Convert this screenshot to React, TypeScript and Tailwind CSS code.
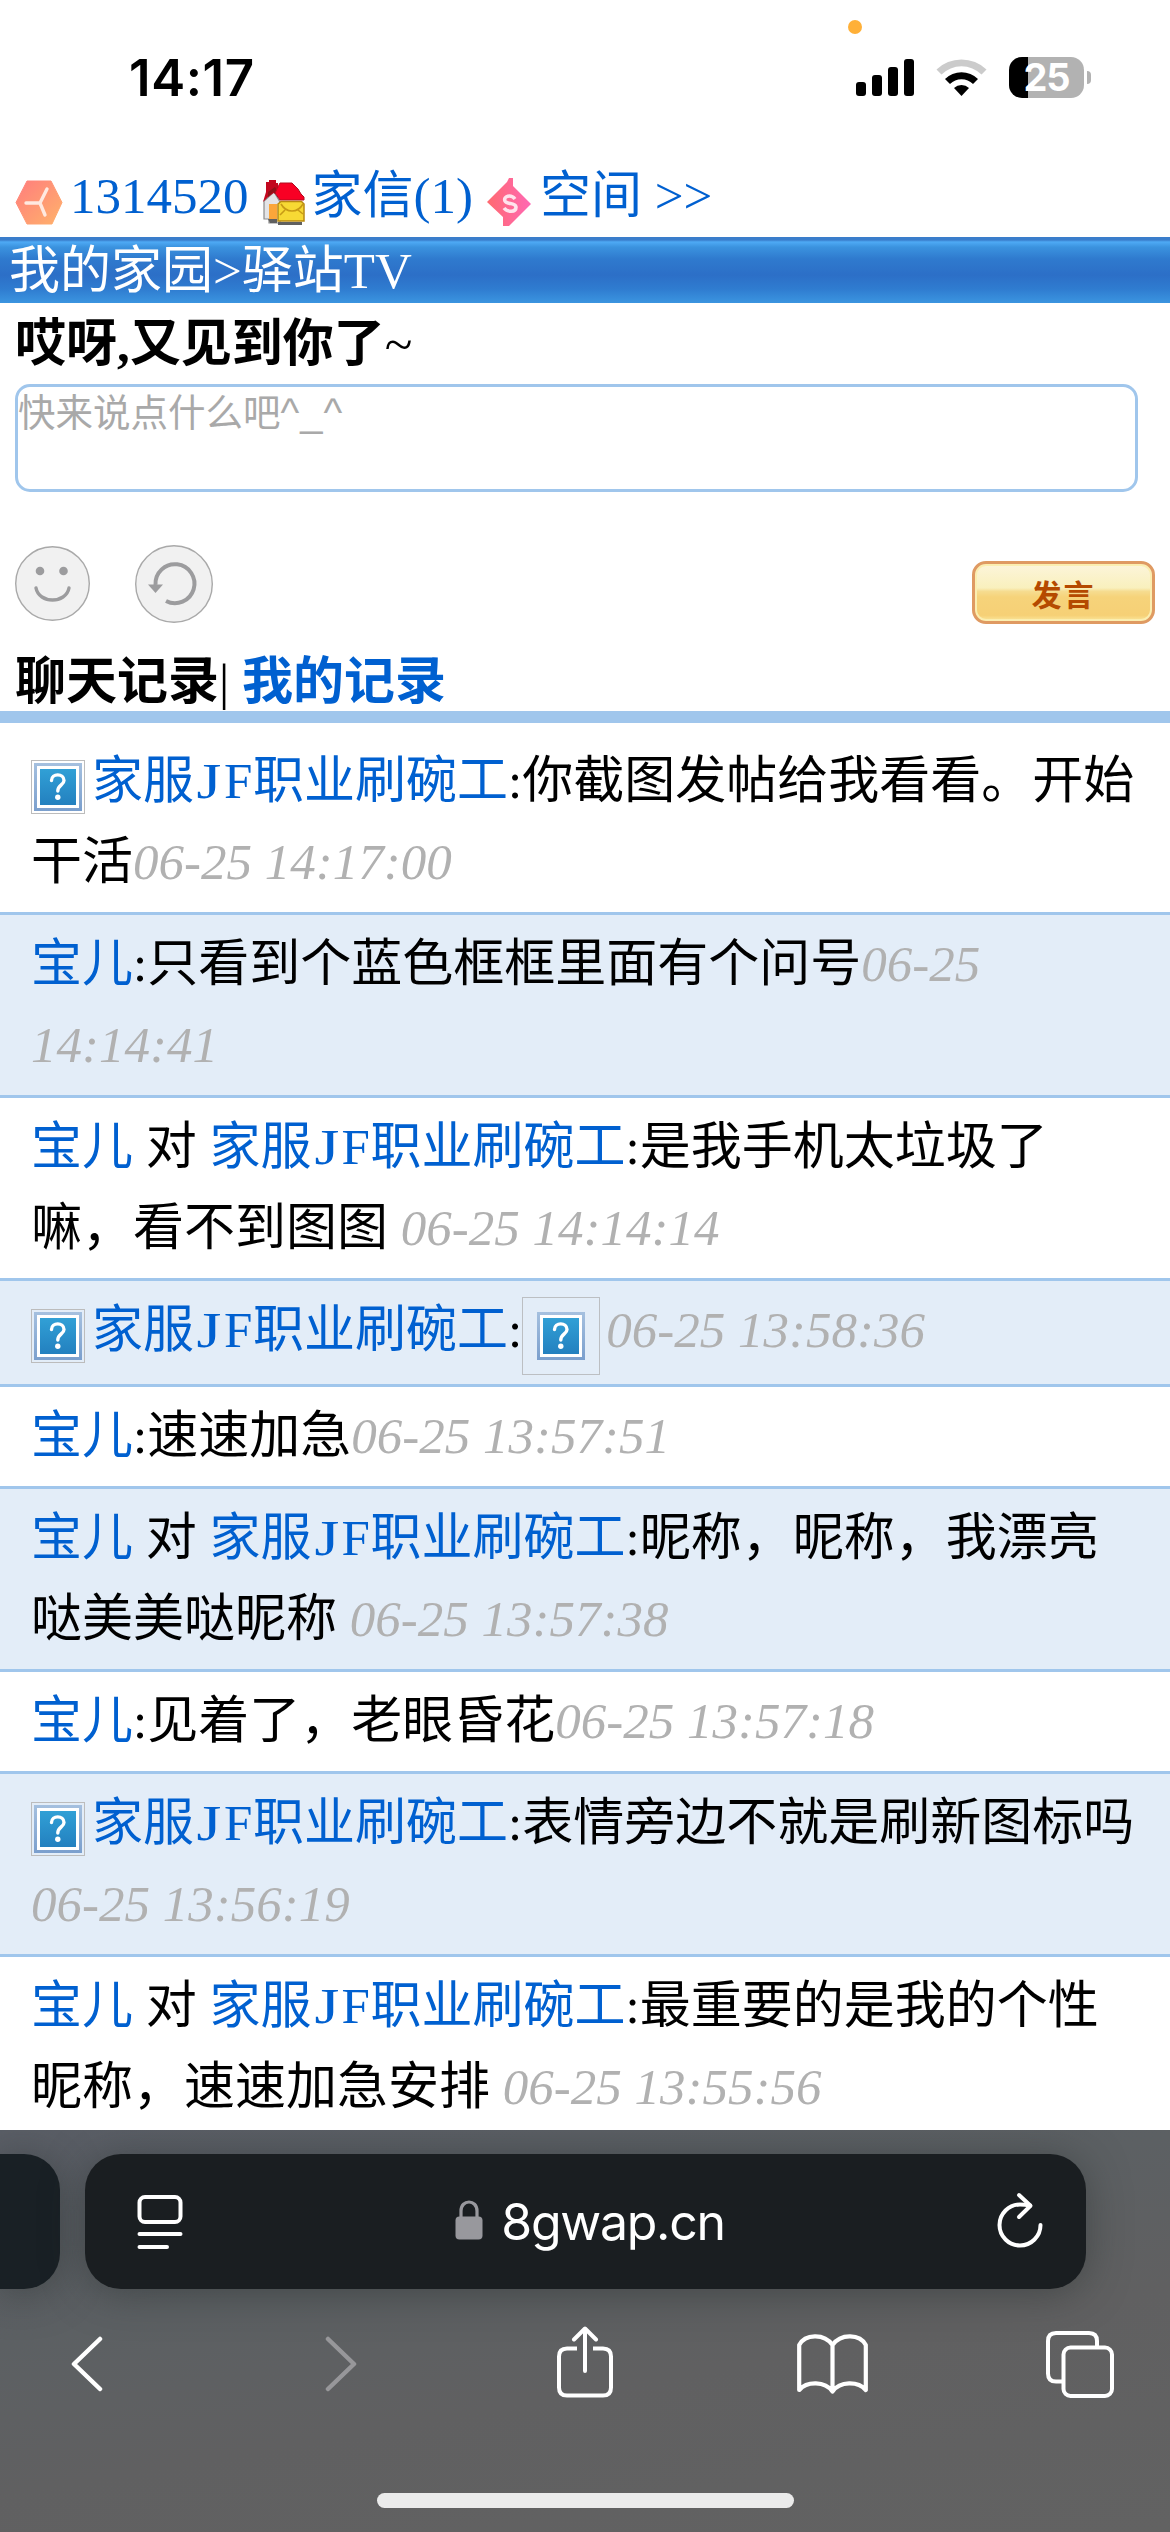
import React from 'react';

interface Message {
    height: string;
    icon?: boolean;
    from: string;
    to?: string;
    lines: string[];
    picture?: boolean;
    // the date either follows the text, wraps in the middle or takes its own line
    time: string[];
}

const JF = '家服JF职业刷碗工';

const messages: Message[] = [
    { height: 'h-[183px]', icon: true, from: JF, lines: ['你截图发帖给我看看。开始', '干活'], time: ['06-25 14:17:00'] },
    { height: 'h-[183px]', from: '宝儿', lines: ['只看到个蓝色框框里面有个问号'], time: ['06-25', '14:14:41'] },
    { height: 'h-[183px]', from: '宝儿', to: JF, lines: ['是我手机太垃圾了', '嘛，看不到图图 '], time: ['06-25 14:14:14'] },
    { height: 'h-[106px]', icon: true, from: JF, lines: [''], picture: true, time: ['06-25 13:58:36'] },
    { height: 'h-[102px]', from: '宝儿', lines: ['速速加急'], time: ['06-25 13:57:51'] },
    { height: 'h-[183px]', from: '宝儿', to: JF, lines: ['昵称，昵称，我漂亮', '哒美美哒昵称 '], time: ['06-25 13:57:38'] },
    { height: 'h-[102px]', from: '宝儿', lines: ['见着了，老眼昏花'], time: ['06-25 13:57:18'] },
    { height: 'h-[183px]', icon: true, from: JF, lines: ['表情旁边不就是刷新图标吗', ''], time: ['06-25 13:56:19'] },
    { height: 'h-[183px]', from: '宝儿', to: JF, lines: ['最重要的是我的个性', '昵称，速速加急安排 '], time: ['06-25 13:55:56'] },
];

const StatusBar: React.FC = () => (
    <div className="relative h-[156px] flex items-start justify-between pl-[129px] pr-[79px] pt-[57px] font-['Inter',sans-serif]">
        <div className="absolute left-[848px] top-5 w-3.5 h-3.5 rounded-full bg-[#ffb038]" />
        <div className="text-[51px] leading-[42px] font-semibold text-black tracking-[0.6px]">14:17</div>
        <div className="flex items-start">
            <svg className="mt-0.5" width="58" height="37" viewBox="0 0 58 37">
                <rect x="0" y="23" width="10" height="14" rx="3" />
                <rect x="16" y="16" width="10" height="21" rx="3" />
                <rect x="32" y="8" width="10" height="29" rx="3" />
                <rect x="48" y="0" width="10" height="37" rx="3" />
            </svg>
            <svg className="ml-[22px] mt-0.5" width="51" height="37" viewBox="0 0 51 37">
                <path d="M0.5 10.5 A36 36 0 0 1 50.5 10.5 L45.5 15.5 A28.5 28.5 0 0 0 5.5 15.5 Z" fill="#cbcbcb" />
                <path d="M9 20 A23.5 23.5 0 0 1 42 20 L37 25 A16.5 16.5 0 0 0 14 25 Z" />
                <path d="M18 29 A11 11 0 0 1 33 29 L25.5 37 Z" />
            </svg>
            <div className="ml-[22px] w-[75px] h-[41px] rounded-[13px] bg-[linear-gradient(90deg,#000_19px,#b2b2b2_19px)] text-white text-[38px] leading-[41px] font-bold text-center tracking-[-1px]">
                25
            </div>
            <div className="ml-[3px] mt-[14px] w-1 h-[13px] rounded-r-full bg-[#b2b2b2]" />
        </div>
    </div>
);

const HexIcon: React.FC = () => (
    <svg className="w-12 h-[45px]" viewBox="0 0 48 45">
        <defs>
            <linearGradient id="hex" x1="0" y1="0" x2="1" y2="1">
                <stop offset="0" stopColor="#ff7d7d" />
                <stop offset="1" stopColor="#ffb26b" />
            </linearGradient>
        </defs>
        <path d="M12 1 H36 L47 22.5 L37 44 H12 L1 22.5 Z" fill="url(#hex)" stroke="url(#hex)" strokeWidth="1" strokeLinejoin="round" />
        <path d="M25 23 H11 M25 23 L32 9 M25 23 L30 35" stroke="#ffe9e0" strokeWidth="3.4" strokeLinecap="round" fill="none" />
    </svg>
);

const HouseIcon: React.FC = () => (
    <svg className="w-[42px] h-[45px]" viewBox="0 0 42 45">
        <path d="M1 21 L11 12 L17 22 V43 H6 V39 H1 Z" fill="#e4e4e6" stroke="#8b8b8b" strokeWidth="1.2" />
        <path d="M6 24 H14 V40 H6 Z" fill="#fba63a" />
        <path d="M15 42 H39 V45 H15 Z M5 39 H14 V43 H7 Z" fill="#606060" />
        <path d="M3 2 H6 V0 H13 V3 H15 V8 L12 12 L5 17 L0 22 L3 12 Z" fill="#c2081f" />
        <path d="M5 12 L12 7 L15 12 L12 14 L10 12 L5 17 Z" fill="#8d1218" />
        <path d="M17 3 H29 L35 9 L38 14 L41 17 V20 H17 L12 13 Z" fill="#f80024" stroke="#b10c1e" />
        <path d="M18 21.5 H38.500 L41 24 V41 H15 V24 Z" fill="#f7d934" stroke="#b98a12" strokeWidth="1.5" />
        <path d="M18 24 Q22 31 29 31 Q36 31 40 24 M22 30 L17 35 M35 30 L40 34" stroke="#c79a16" strokeWidth="1.6" fill="none" />
    </svg>
);

const DiamondIcon: React.FC = () => (
    <svg className="w-11 h-12" viewBox="0 0 44 48">
        <defs>
            <linearGradient id="dia" x1="0" y1="0" x2="1" y2="0">
                <stop offset="0" stopColor="#ff6a70" />
                <stop offset="1" stopColor="#ff68b4" />
            </linearGradient>
        </defs>
        <path d="M22 0 H26 V8 L44 26 L22 48 H16 V39 L0 24 L20 4 Z" fill="url(#dia)" />
        <path d="M28 21 C24 16 16 18 18 23 C20 27 28 24 29 29 C29 35 20 34 17 30" stroke="#ffe3ec" strokeWidth="3.600" fill="none" />
    </svg>
);

// Safari's placeholder for a picture that could not be loaded
const MissingImage: React.FC<{ large?: boolean }> = ({ large }) => (
    <span
        className={
            large
                ? 'inline-flex items-center justify-center w-[78px] h-[78px] border border-[#bcbfc3] align-[-13px] -my-5 mr-[6px]'
                : 'inline-flex items-center justify-center w-[54px] h-[54px] border border-[#bcbcbc] align-[-13px] -my-2 mr-[7px]'
        }
    >
        <svg width="48" height="48" viewBox="0 0 48 48">
            <defs>
                <linearGradient id="frame" x1="0" y1="0" x2="0" y2="1">
                    <stop offset="0" stopColor="#a5c0df" />
                    <stop offset="1" stopColor="#7b9fcd" />
                </linearGradient>
                <linearGradient id="fill" x1="0" y1="0" x2="0" y2="1">
                    <stop offset="0" stopColor="#31a0d6" />
                    <stop offset="1" stopColor="#2380bf" />
                </linearGradient>
            </defs>
            <rect width="48" height="48" fill="url(#frame)" />
            <rect x="3" y="3" width="42" height="42" fill="#fff" />
            <rect x="6" y="6" width="36" height="36" fill="url(#fill)" />
            <path d="M17.500 17.500 C17.500 10 30 10 30 17.500 C30 22 23.800 22 23.800 28" stroke="#fff" strokeWidth="3.400" fill="none" strokeLinecap="round" />
            <circle cx="23.800" cy="34.200" r="2.700" fill="#fff" />
        </svg>
    </span>
);

const Name: React.FC<{ text: string }> = ({ text }) => {
    const [before, after] = text.split('JF');
    return (
        <a className="text-[#0060d0]">
            {before}
            {after && (
                <>
                    <span className="inline-block w-[30px] pl-[5px] scale-x-125">J</span>
                    <span className="inline-block w-[29px]">F</span>
                </>
            )}
            {after}
        </a>
    );
};

const MessageRow: React.FC<{ message: Message; index: number }> = ({ message, index }) => (
    <li
        className={`${message.height} shrink-0 border-b-[3px] border-[#a0c6ec] pl-[31px] pr-[29px] py-[9px] leading-[81px] whitespace-pre ${
            index % 2 ? 'bg-[#e3edf8]' : 'bg-white'
        }`}
    >
        {message.icon && <MissingImage />}
        <Name text={message.from} />
        {message.to && (
            <>
                {' 对 '}
                <Name text={message.to} />
            </>
        )}
        :
        {message.lines.map((line, i) => (
            <React.Fragment key={i}>
                {i > 0 && <br />}
                {line}
            </React.Fragment>
        ))}
        {message.picture && <MissingImage large />}
        {message.time.map((part, i) => (
            <React.Fragment key={i}>
                {i > 0 && <br />}
                <i className="text-[#b1b1b1]">{part}</i>
            </React.Fragment>
        ))}
    </li>
);

const BrowserBar: React.FC = () => (
    <footer className="h-[402px] shrink-0 pt-6 overflow-hidden bg-[linear-gradient(170deg,#5a5e66_0%,#5c6063_35%,#606061_60%,#626262_100%)]">
        <div className="flex gap-[25px] text-white">
            <div className="w-[60px] h-[135px] rounded-r-[36px] bg-[#192025] shadow-[0_4px_40px_rgba(40,46,46,0.5)]" />
            <div className="w-[1001px] h-[135px] rounded-[36px] bg-[#1a1e21] shadow-[0_4px_40px_rgba(40,46,46,0.5)] flex items-center pl-[52px] pr-[43px]">
                <svg width="46" height="54" viewBox="0 0 46 54" fill="none" stroke="#fff" strokeWidth="4" strokeLinecap="round">
                    <rect x="2.500" y="2" width="41" height="25" rx="5.500" />
                    <path d="M2.500 39 H43.500 M2.500 52 H30" />
                </svg>
                <div className="flex-1 flex items-center justify-center">
                    <svg className="mr-[18px] -mt-1" width="28" height="40" viewBox="0 0 28 40">
                        <path d="M6 18 V11 C6 -1 22 -1 22 11 V18" fill="none" stroke="#98989d" strokeWidth="3.200" />
                        <rect x="0.500" y="16.500" width="27" height="23" rx="4" fill="#98989d" />
                    </svg>
                    <span className="font-['Inter',sans-serif] text-[50px] leading-[60px] tracking-[-1.3px]">8gwap.cn</span>
                </div>
                <svg className="-mt-1" width="46" height="56" viewBox="0 0 46 56" fill="none" stroke="#fff" strokeWidth="4" strokeLinecap="round" strokeLinejoin="round">
                    <path d="M43.500 33 A20.500 20.500 0 1 1 23 12.500 Q28 12.500 33 13.500" />
                    <path d="M22 3 L33.500 13.800 L22 25" />
                </svg>
            </div>
        </div>
        <div className="mt-[35px] flex items-center h-[80px] pl-[70px]">
            <svg width="33" height="56" viewBox="0 0 33 56" fill="none" stroke="#fff" strokeWidth="4.500" strokeLinecap="round" strokeLinejoin="round">
                <path d="M30 3 L4 28 L30 53" />
            </svg>
            <svg className="ml-[222px]" width="33" height="56" viewBox="0 0 33 56" fill="none" stroke="#97979a" strokeWidth="4.500" strokeLinecap="round" strokeLinejoin="round">
                <path d="M3 3 L29 28 L3 53" />
            </svg>
            <svg className="ml-[199px] -mt-1" width="56" height="72" viewBox="0 0 56 72" fill="none" stroke="#fff" strokeWidth="4" strokeLinecap="round" strokeLinejoin="round">
                <path d="M28 45 V3 M17 13.500 L28 2.500 L39 13.500" />
                <path strokeLinecap="butt" d="M20 22.500 H10 Q2 22.500 2 30.500 V61.500 Q2 69.500 10 69.500 H46 Q54 69.500 54 61.500 V30.500 Q54 22.500 46 22.500 H36" />
            </svg>
            <svg className="ml-[184px]" width="71" height="60" viewBox="0 0 71 60" fill="none" stroke="#fff" strokeWidth="4.200" strokeLinecap="round" strokeLinejoin="round">
                <path d="M35.500 11 C27 -1 8 0 2.200 11 V56 C10 47 28 47 35.500 57.500 C43 47 61 47 68.800 56 V11 C63 0 44 -1 35.500 11 Z M35.500 11 V57" />
            </svg>
            <svg className="ml-[178px]" width="68" height="67" viewBox="0 0 68 67" fill="none" stroke="#fff" strokeWidth="4">
                <path d="M16 50.500 H10 Q2 50.500 2 42.500 V10 Q2 2 10 2 H43 Q51 2 51 10 V15" />
                <rect x="17.500" y="16.500" width="48.500" height="48.500" rx="7" />
            </svg>
        </div>
        <div className="mx-auto mt-[89px] w-[417px] h-[15px] rounded-full bg-[#ebebeb]" />
    </footer>
);

export default function App() {
    return (
        <div className="w-[1170px] h-[2532px] flex flex-col overflow-hidden bg-white text-black text-[51px] font-['Liberation_Serif','Noto_Sans_CJK_SC',serif]">
            <StatusBar />

            <nav className="h-[81px] shrink-0 flex items-center pl-[15px] text-[#0060d0] leading-[81px] whitespace-pre">
                <span className="mt-[11px]"><HexIcon /></span>
                <a className="ml-[7px]">1314520</a>
                <span className="ml-[14px] mt-[11px]"><HouseIcon /></span>
                <a className="ml-[7px]">家信(1)</a>
                <span className="ml-[14px] mt-[11px]"><DiamondIcon /></span>
                <a className="ml-[9px]">空间 &gt;&gt;</a>
            </nav>

            <div className="h-[66px] shrink-0 pl-[9px] text-white leading-[68px] bg-[linear-gradient(180deg,#3a7dcb_0px,#3a7dcb_3px,#4eaaf5_5px,#3b93df_10px,#2f7ace_22px,#2c6fc7_38px,#2f7cd0_52px,#3b95e0_66px)]">
                我的家园&gt;驿站TV
            </div>

            <h1 className="h-[81px] shrink-0 pl-[15px] leading-[83px] font-bold">
                哎呀,又见到你了<span className="font-normal">~</span>
            </h1>

            <div className="ml-[15px] w-[1123px] h-[108px] shrink-0 border-[3px] border-[#a0c6ec] rounded-[15px] text-[#a9a9a9] text-[37.5px] leading-[50px] font-['Liberation_Sans','Noto_Sans_CJK_SC',sans-serif]">
                快来说点什么吧<span className="text-[40px] tracking-[1px]">^_^</span>
            </div>

            <div className="h-[150px] shrink-0 flex pl-[15px] pr-[15px] pt-[53px]">
                <svg className="mt-px" width="75" height="75" viewBox="0 0 75 75">
                    <circle cx="37.500" cy="37.500" r="36.800" fill="#f1f1f1" stroke="#a9a9a9" strokeWidth="1.400" />
                    <circle cx="25" cy="25" r="4.300" fill="#9c9c9e" />
                    <circle cx="48.500" cy="25" r="4.300" fill="#9c9c9e" />
                    <path d="M21 42 C24 58 51 58 54 42" fill="none" stroke="#9c9c9e" strokeWidth="3.400" strokeLinecap="round" />
                </svg>
                <svg className="ml-[45px]" width="78" height="78" viewBox="0 0 78 78">
                    <circle cx="39" cy="39" r="38.300" fill="#f1f1f1" stroke="#a9a9a9" strokeWidth="1.400" />
                    <path d="M20.500 40 A19.500 19.500 0 1 1 31 56" fill="none" stroke="#9c9c9e" strokeWidth="4" />
                    <path d="M13 39.500 H28 L20.500 48 Z" fill="#9c9c9e" />
                </svg>
                <button className="ml-auto mt-4 w-[183px] h-[63px] rounded-[14px] border-[3px] border-[#df9a62] text-[#b54a00] text-[30px] tracking-[2px] leading-[56px] font-bold font-['Noto_Sans_CJK_SC',sans-serif] shadow-[inset_0_0_0_2px_#fbeeb0] bg-[linear-gradient(180deg,#fcf5db_0%,#f9f0bd_42%,#f6dc90_48%,#f6d37a_58%,#f6d076_90%,#fbe79c_100%)]">
                    发言
                </button>
            </div>

            <div className="h-[81px] shrink-0 pl-[15px] leading-[81px] border-b-[12px] border-[#a0c6ec] font-bold whitespace-pre">
                聊天记录<span className="font-normal">| </span>
                <a className="text-[#0060d0]">我的记录</a>
            </div>

            <ul className="h-[1407px] shrink-0 pt-[9px] flex flex-col overflow-hidden">
                {messages.map((message, index) => (
                    <MessageRow key={index} message={message} index={index} />
                ))}
            </ul>

            <BrowserBar />
        </div>
    );
}
